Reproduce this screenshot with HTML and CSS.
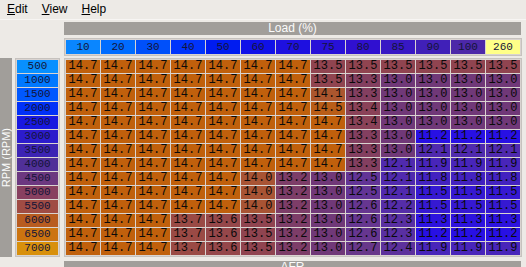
FILE: index.html
```html
<!DOCTYPE html>
<html>
<head>
<meta charset="utf-8">
<title>AFR Table</title>
<link rel="stylesheet" href="styles.css">
</head>
<body>
<div class="menubar">
  <span class="menu"><u>E</u>dit</span><span class="menu"><u>V</u>iew</span><span class="menu"><u>H</u>elp</span>
</div>
<div class="editor">
  <div class="axis axis-x">Load (%)</div>
  <div class="hdr" id="hdr"></div>
  <div class="axis axis-y"><span>RPM (RPM)</span></div>
  <div class="rpm" id="rpm"></div>
  <div class="table" id="table"></div>
  <div class="axis axis-z">AFR</div>
</div>
<script src="script.js"></script>
</body>
</html>
```

FILE: styles.css
```css
html, body {
  margin: 0;
  padding: 0;
  background: #edeae6;
  font-family: "Liberation Sans", Arial, sans-serif;
  overflow: hidden;
}
.menubar {
  height: 19px;
  line-height: 19px;
  font-size: 12px;
  color: #000;
  display: flex;
  border-bottom: 1px solid #f7f5f3;
}
.menu {
  padding: 0 7px;
}
.menu u {
  text-decoration-thickness: 1px;
  text-underline-offset: 1px;
}
.editor {
  display: grid;
  grid-template-columns: 12px 52px 458px;
  grid-template-areas:
    ". . lx"
    ". . hd"
    "ly rp tb"
    ". . lz";
}
.axis {
  background: #a19e9a;
  color: #fbfbfb;
  font-size: 12px;
}
.axis-x {
  grid-area: lx;
  margin-top: 2px;
  height: 13px;
  line-height: 13px;
  text-align: center;
  width: 457px;
}
.axis-z {
  grid-area: lz;
  margin-top: 4px;
  height: 13px;
  line-height: 13px;
  text-align: center;
  width: 457px;
}
.axis-y {
  grid-area: ly;
  margin-top: 2px;
  display: flex;
  align-items: center;
  justify-content: center;
  font-size: 11px;
}
.axis-y span {
  writing-mode: vertical-rl;
  transform: rotate(180deg);
  white-space: nowrap;
}
.hdr, .rpm, .table {
  border: 1px solid #c6c2be;
  padding: 1px;
  background: #d9d3d0;
  display: grid;
  gap: 1px;
  font-family: "Liberation Mono", "Courier New", monospace;
}
.hdr {
  grid-area: hd;
  margin-top: 3px;
  grid-template-columns: repeat(13, 34px);
  grid-auto-rows: 14px;
}
.rpm {
  grid-area: rp;
  margin-top: 2px;
  margin-left: 3px;
  width: 45px;
  box-sizing: border-box;
  grid-template-columns: 41px;
  grid-auto-rows: 13px;
  align-self: start;
}
.table {
  grid-area: tb;
  margin-top: 2px;
  grid-template-columns: repeat(13, 34px);
  grid-auto-rows: 13px;
}
.hcell {
  font-size: 11px;
  line-height: 14px;
  text-align: center;
  color: #141438;
}
.rcell {
  font-size: 11px;
  line-height: 13px;
  text-align: center;
  color: #141438;
}
.cell {
  font-size: 12px;
  line-height: 13px;
  text-align: center;
  color: #0a0a0a;
}
```

FILE: script.js
```js
const loads = [10, 20, 30, 40, 50, 60, 70, 75, 80, 85, 90, 100, 260];
const loadColors = ["#0a86ff", "#006cff", "#0050fa", "#0034fc", "#001cf0", "#1010e8",
  "#1e10e0", "#2810d8", "#3010d0", "#3818c4", "#4020b8", "#4c28a8", "#ffff88"];
const rpms = [500, 1000, 1500, 2000, 2500, 3000, 3500, 4000, 4500, 5000, 5500, 6000, 6500, 7000];
const rpmColors = ["#0890ff", "#0078ff", "#0058ff", "#0030f8", "#1818e0", "#2c1ccc", "#3c24b4",
  "#503098", "#6c3880", "#884060", "#a04c44", "#b85c20", "#cc7410", "#d8900c"];
const data = [
  [14.7,14.7,14.7,14.7,14.7,14.7,14.7,13.5,13.5,13.5,13.5,13.5,13.5],
  [14.7,14.7,14.7,14.7,14.7,14.7,14.7,13.5,13.3,13.0,13.0,13.0,13.0],
  [14.7,14.7,14.7,14.7,14.7,14.7,14.7,14.1,13.3,13.0,13.0,13.0,13.0],
  [14.7,14.7,14.7,14.7,14.7,14.7,14.7,14.5,13.4,13.0,13.0,13.0,13.0],
  [14.7,14.7,14.7,14.7,14.7,14.7,14.7,14.7,13.4,13.0,13.0,13.0,13.0],
  [14.7,14.7,14.7,14.7,14.7,14.7,14.7,14.7,13.3,13.0,11.2,11.2,11.2],
  [14.7,14.7,14.7,14.7,14.7,14.7,14.7,14.7,13.3,13.0,12.1,12.1,12.1],
  [14.7,14.7,14.7,14.7,14.7,14.7,14.7,14.7,13.3,12.1,11.9,11.9,11.9],
  [14.7,14.7,14.7,14.7,14.7,14.0,13.2,13.0,12.5,12.1,11.8,11.8,11.8],
  [14.7,14.7,14.7,14.7,14.7,14.0,13.2,13.0,12.5,12.1,11.5,11.5,11.5],
  [14.7,14.7,14.7,14.7,14.7,14.0,13.2,13.0,12.6,12.2,11.5,11.5,11.5],
  [14.7,14.7,14.7,13.7,13.6,13.5,13.2,13.0,12.6,12.3,11.3,11.3,11.3],
  [14.7,14.7,14.7,13.7,13.6,13.5,13.2,13.0,12.6,12.3,11.2,11.2,11.2],
  [14.7,14.7,14.7,13.7,13.6,13.5,13.2,13.0,12.7,12.4,11.9,11.9,11.9]
];
const anchors = [
  [11.2, [40, 16, 228]],
  [12.0, [76, 40, 180]],
  [12.6, [102, 54, 144]],
  [13.0, [112, 56, 120]],
  [13.5, [144, 68, 80]],
  [14.0, [168, 84, 52]],
  [14.7, [192, 96, 12]]
];
function afrColor(v) {
  if (v <= anchors[0][0]) return "rgb(" + anchors[0][1].join(",") + ")";
  for (let i = 1; i < anchors.length; i++) {
    const [v1, c1] = anchors[i];
    const [v0, c0] = anchors[i - 1];
    if (v <= v1) {
      const t = (v - v0) / (v1 - v0);
      const c = c0.map((x, k) => Math.round(x + (c1[k] - x) * t));
      return "rgb(" + c.join(",") + ")";
    }
  }
  return "rgb(" + anchors[anchors.length - 1][1].join(",") + ")";
}
const hdr = document.getElementById("hdr");
loads.forEach((l, i) => {
  const d = document.createElement("div");
  d.className = "hcell";
  d.style.background = loadColors[i];
  d.textContent = l;
  hdr.appendChild(d);
});
const rpm = document.getElementById("rpm");
rpms.forEach((r, i) => {
  const d = document.createElement("div");
  d.className = "rcell";
  d.style.background = rpmColors[i];
  d.textContent = r;
  rpm.appendChild(d);
});
const table = document.getElementById("table");
data.forEach(row => row.forEach(v => {
  const d = document.createElement("div");
  d.className = "cell";
  d.style.background = afrColor(v);
  d.textContent = v.toFixed(1);
  table.appendChild(d);
}));
```
